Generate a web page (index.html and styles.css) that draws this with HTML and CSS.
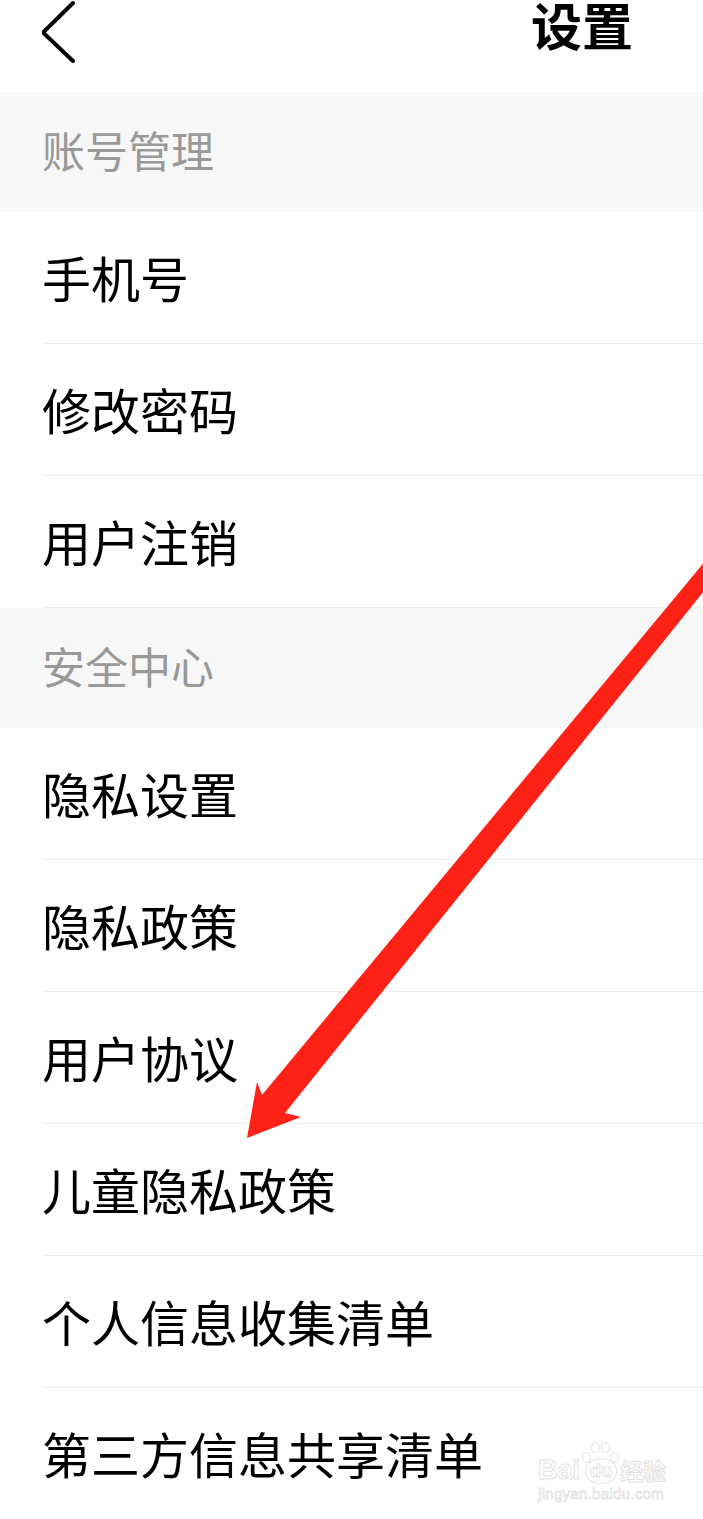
FILE: index.html
```html
<!DOCTYPE html>
<html lang="zh-CN">

<head>
  <meta charset="UTF-8">
  <meta name="viewport" content="width=device-width, initial-scale=1.0">
  <title>设置</title>
  <link rel="stylesheet" href="styles.css">
</head>

<body>
  <header class="nav">
    <svg class="back" width="40" height="66" viewBox="0 0 40 66">
      <polyline points="31,3 1,32.5 31,61" fill="none" stroke="#000" stroke-width="4" stroke-linecap="round" stroke-linejoin="miter" />
    </svg>
    <h1 class="title">设置</h1>
  </header>

  <section class="group">
    <div class="group-title">账号管理</div>
    <ul class="list">
      <li class="item">手机号</li>
      <li class="item">修改密码</li>
      <li class="item">用户注销</li>
    </ul>
  </section>

  <section class="group">
    <div class="group-title">安全中心</div>
    <ul class="list">
      <li class="item">隐私设置</li>
      <li class="item">隐私政策</li>
      <li class="item">用户协议</li>
      <li class="item">儿童隐私政策</li>
      <li class="item">个人信息收集清单</li>
      <li class="item">第三方信息共享清单</li>
    </ul>
  </section>

  <!-- annotation arrow drawn over the list -->
  <svg class="arrow" width="703" height="1519" viewBox="0 0 703 1519">
    <polygon points="716,548 262,1095 257,1082 247,1138 301,1117 285,1113 716,576" fill="#fe2216" />
  </svg>

  <div class="watermark">
    <div class="wm-logo">
      <span>Bai</span>
      <span class="wm-paw">
        <i class="toe t1"></i><i class="toe t2"></i><i class="toe t3"></i><i class="toe t4"></i>
        <span class="wm-du">du</span>
      </span>
      <span class="wm-cn">经验</span>
    </div>
    <div class="wm-url">jingyan.baidu.com</div>
  </div>
</body>

</html>
```

FILE: styles.css
```css
body,
html {
  margin: 0;
  padding: 0;
  width: 703px;
  height: 1519px;
  overflow: hidden;
  background-color: #fff;
  font-family: "Noto Sans CJK SC", "Noto Sans", sans-serif;
  color: #000;
}

body {
  position: relative;
}

.nav {
  height: 92px;
  display: flex;
  justify-content: space-between;
  align-items: flex-start;
  padding: 0 70px 0 42px;
}

.back {
  display: block;
}

.title {
  margin: 0;
  font-size: 51px;
  font-weight: 700;
  line-height: 48px;
}

.group-title {
  height: 120px;
  box-sizing: border-box;
  display: flex;
  align-items: center;
  padding: 0 0 6px 42px;
  background-color: #f7f7f7;
  color: #999;
  font-size: 43px;
}

.list {
  list-style: none;
  margin: 0;
  padding: 0;
}

.item {
  height: 132px;
  box-sizing: border-box;
  margin-left: 42px;
  display: flex;
  align-items: center;
  padding-bottom: 3px;
  border-bottom: 1px solid #eeeeee;
  font-size: 49px;
}

.arrow {
  position: absolute;
  top: 0;
  left: 0;
  pointer-events: none;
}

.watermark {
  position: absolute;
  left: 538px;
  top: 1440px;
  width: 140px;
  color: #fff;
  font-family: "Liberation Sans", Arial, sans-serif;
  white-space: nowrap;
}

.wm-logo {
  display: flex;
  align-items: flex-end;
  height: 44px;
  font-size: 27px;
  font-weight: 700;
  line-height: 27px;
  -webkit-text-stroke: 1px #e3e3e3;
}

.wm-cn {
  font-family: "Noto Sans CJK SC", sans-serif;
  font-size: 23px;
  line-height: 27px;
}

.wm-paw {
  position: relative;
  width: 36px;
  height: 44px;
  margin: 0 2px;
}

.wm-du {
  position: absolute;
  left: 3px;
  bottom: 0;
  width: 30px;
  height: 24px;
  border: 1px solid #e3e3e3;
  border-radius: 50% 50% 45% 45%;
  font-size: 18px;
  line-height: 24px;
  text-align: center;
}

.toe {
  position: absolute;
  width: 7px;
  height: 9px;
  border: 1px solid #e3e3e3;
  border-radius: 50%;
}

.t1 {
  left: 0;
  top: 12px;
}

.t2 {
  left: 9px;
  top: 2px;
}

.t3 {
  left: 19px;
  top: 2px;
}

.t4 {
  left: 28px;
  top: 12px;
}

.wm-url {
  margin-top: 2px;
  font-size: 15px;
  line-height: 16px;
  -webkit-text-stroke: 0.8px #e3e3e3;
  letter-spacing: 0.3px;
}
```
